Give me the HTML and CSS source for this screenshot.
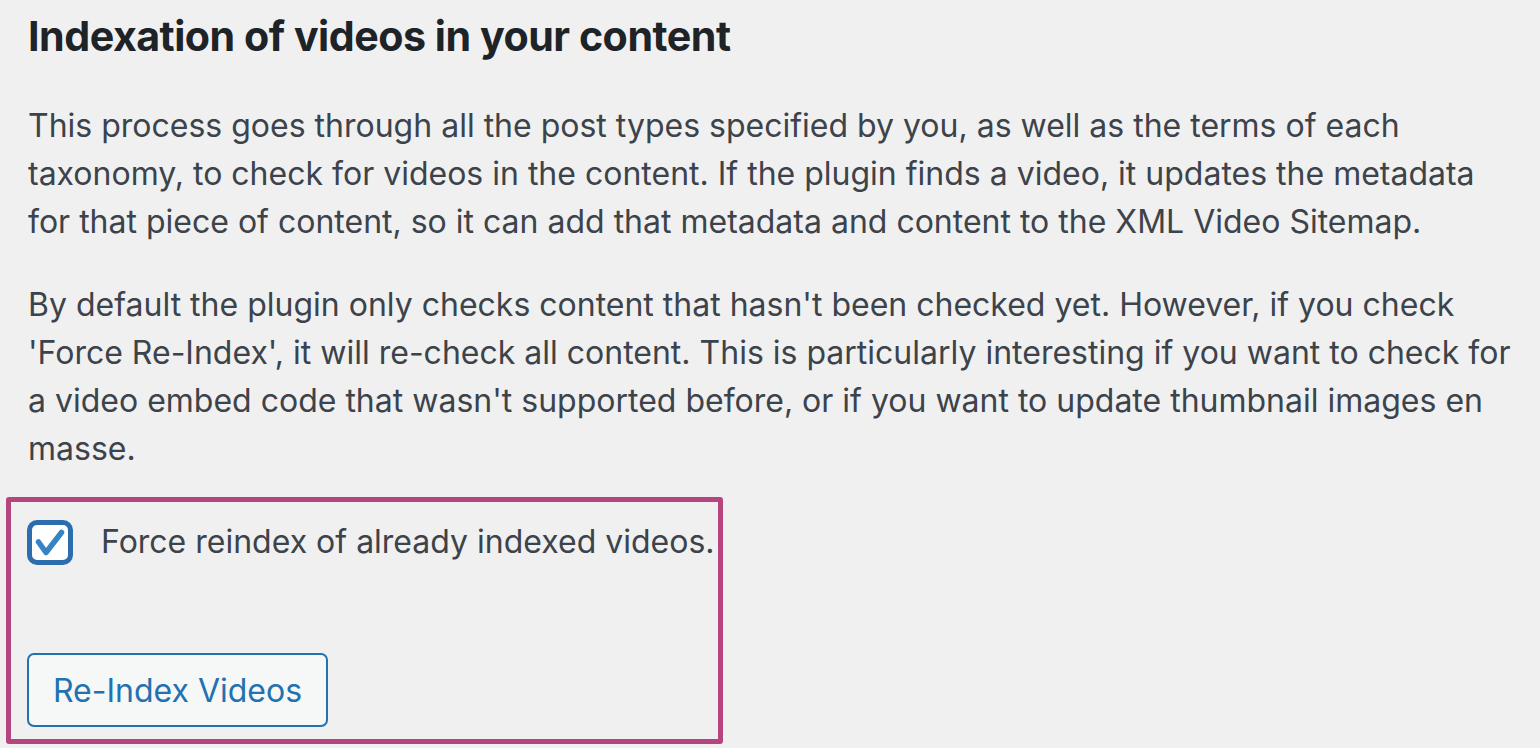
FILE: index.html
```html
<!DOCTYPE html>
<html lang="en">

<head>
    <meta charset="UTF-8">
    <meta name="viewport" content="width=device-width, initial-scale=1.0">
    <title>Video Sitemap</title>
    <link rel="stylesheet" href="styles.css">
</head>

<body>

    <div class="wrap">
        <h2 class="title">Indexation of videos in your content</h2>
        <p>This process goes through all the post types specified by you, as well as the terms of each
            taxonomy, to check for videos in the content. If the plugin finds a video, it updates the metadata
            for that piece of content, so it can add that metadata and content to the XML Video Sitemap.</p>
        <p>By default the plugin only checks content that hasn't been checked yet. However, if you check
            'Force Re-Index', it will re-check all content. This is particularly interesting if you want to check for
            a video embed code that wasn't supported before, or if you want to update thumbnail images en
            masse.</p>

        <div class="highlight">
            <label class="check-row">
                <span class="checkbox">
                    <svg width="36" height="35" viewBox="0 0 36 35">
                        <path d="M6.5 17 L14 27.5 L29.5 7.5" fill="none" stroke="#3582c4" stroke-width="5.5" stroke-linecap="round" stroke-linejoin="round" />
                    </svg>
                </span>
                Force reindex of already indexed videos.
            </label>
            <button class="button">Re-Index Videos</button>
        </div>
    </div>

</body>

</html>
```

FILE: styles.css
```css
body {
    margin: 0;
    padding: 0;
    background-color: #f0f0f1;
    font-family: Inter, "Open Sans", sans-serif;
    color: #3c434a;
}

.wrap {
    padding: 0 28px;
}

.title {
    margin: 0;
    padding-top: 10px;
    font-size: 41.2px;
    font-weight: 700;
    line-height: 52px;
    color: #1d2327;
    letter-spacing: -0.5px;
}

p {
    font-size: 32px;
    line-height: 48px;
    margin: 40px 0 0;
    max-width: 1492px;
}

p + p {
    margin-top: 35px;
}

.highlight {
    width: 717px;
    box-sizing: border-box;
    margin: 24px 0 0 -22px;
    border: 5px solid #b5457f;
    border-radius: 3px;
    padding: 16px 0 12px 16px;
}

.check-row {
    display: flex;
    align-items: center;
    gap: 28px;
    font-size: 32px;
    line-height: 48px;
    white-space: nowrap;
}

.checkbox {
    width: 46px;
    height: 45px;
    box-sizing: border-box;
    border: 5px solid #2c6ead;
    border-radius: 10px;
    background-color: #fff;
    display: flex;
    align-items: center;
    justify-content: center;
    flex-shrink: 0;
}

.button {
    display: block;
    margin-top: 87px;
    width: 301px;
    height: 74px;
    border: 2px solid #2271b1;
    border-radius: 7px;
    background-color: #f6f7f7;
    color: #2271b1;
    font-family: Inter, "Open Sans", sans-serif;
    font-size: 32px;
    padding: 0;
}
```
